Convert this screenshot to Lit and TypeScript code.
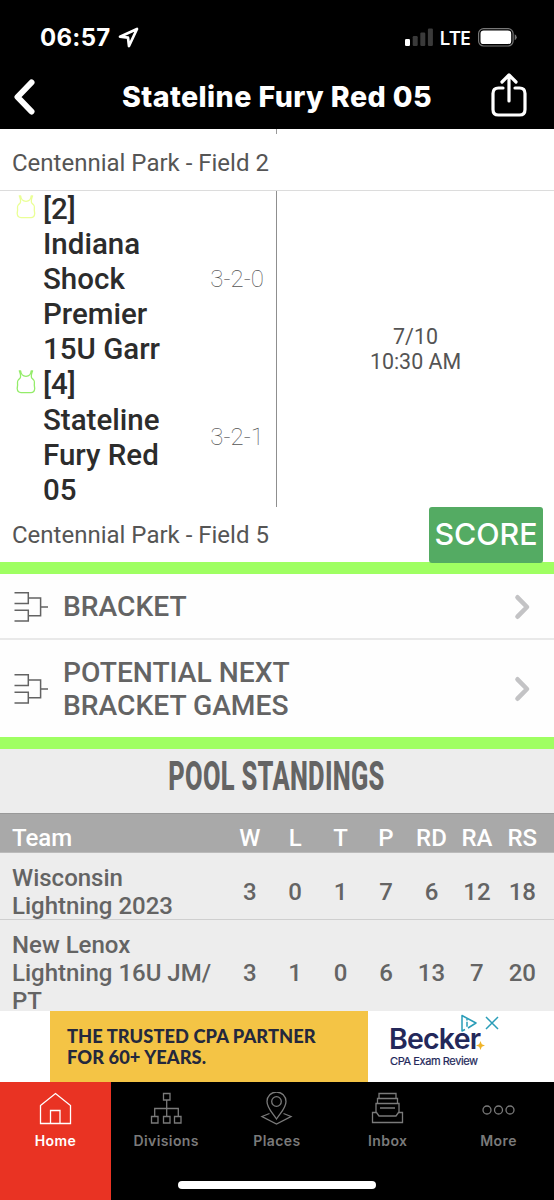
import { LitElement, html, css, svg } from "lit";
import { customElement, property } from "lit/decorators.js";
import { classMap } from "lit/directives/class-map.js";

@customElement("status-bar")
class StatusBar extends LitElement {
  static styles = css`
    :host { display: flex; height: 62px; box-sizing: border-box; padding: 24px 38px 0 40px; justify-content: space-between; align-items: flex-start; color: #fff; font-family: Inter, sans-serif; }
    .side { display: flex; align-items: center; height: 26px; }
    .time { font-size: 24px; font-weight: 700; letter-spacing: 0.300px; margin-right: 7px; }
    .net { font-family: "Open Sans", sans-serif; font-size: 20px; font-weight: 600; letter-spacing: -0.900px; margin: 0 8px 0 6px; }
    .battery { margin-right: -1px; }
    svg { display: block; }
  `;
  render() {
    return html`
      <div class="side">
        <span class="time">06:57</span>
        <svg width="21" height="21" viewBox="0 0 21 21"><path d="M2 9.700 19 2 11 19 10 10.700Z" fill="none" stroke="#fff" stroke-width="2.700" stroke-linejoin="round"/></svg>
      </div>
      <div class="side">
        <svg width="28" height="18" viewBox="0 0 28 18">
          <rect x="0" y="11" width="5" height="7" rx="1.2" fill="#fff"/>
          <g fill="#3a3a3a"><rect x="7.700" y="8" width="5" height="10" rx="1.2"/><rect x="15.300" y="4.500" width="5" height="13.500" rx="1.2"/><rect x="22.900" y="0.500" width="5" height="17.500" rx="1.2"/></g>
        </svg>
        <span class="net">LTE</span>
        <svg class="battery" width="39" height="19" viewBox="0 0 39 19">
          <rect x="0.600" y="0.600" width="34.500" height="17.400" rx="5" fill="none" stroke="#777" stroke-width="1.200"/>
          <rect x="2.500" y="2.500" width="30.700" height="13.600" rx="3.200" fill="#fff"/>
          <path d="M36.700 6.300q2 .8 2 3t-2 3z" fill="#777"/>
        </svg>
      </div>`;
  }
}

@customElement("nav-header")
class NavHeader extends LitElement {
  static styles = css`
    :host { display: grid; grid-template-columns: 50px 1fr 50px; height: 67px; align-items: center; box-sizing: border-box; padding: 2px 13px 0; color: #fff; }
    .title { font: 800 28.600px Inter, sans-serif; letter-spacing: 0.420px; white-space: nowrap; justify-self: center; }
    svg { display: block; }
    .share { margin: 0 0 4px; }
  `;
  render() {
    return html`
      <svg class="back" width="22" height="36" viewBox="0 0 22 36"><path d="M18.500 3.500 4.500 18 18.500 32.500" fill="none" stroke="#fff" stroke-width="6" stroke-linecap="round" stroke-linejoin="round"/></svg>
      <span class="title">Stateline Fury Red 05</span>
      <svg class="share" width="36" height="46" viewBox="0 0 36 46"><path d="M12 16H7.500Q2 16 2 21.500V37.500Q2 43 7.500 43H28.500Q34 43 34 37.500V21.500Q34 16 28.500 16H24M18 29V3M11 10 18 3 25 10" fill="none" stroke="#fff" stroke-width="3.200" stroke-linecap="round" stroke-linejoin="round"/></svg>`;
  }
}

interface Side { lines: string[]; record: string; tone: string; }

@customElement("game-card")
class GameCard extends LitElement {
  static styles = css`
    :host { display: flex; height: 315.500px; border-top: 1px solid #dcdcdc; }
    .teams { width: 276px; border-right: 1px solid #8f8f8f; }
    .team { display: grid; grid-template-columns: 43px 1fr auto; align-items: start; }
    .name { font: 500 29.500px/35.100px Roboto, sans-serif; color: #2c2c2c; padding-top: 1px; margin-bottom: -1px; }
    .line { display: block; white-space: nowrap; }
    .record { align-self: center; font: 100 24px Roboto, sans-serif; color: #555; margin-right: 12px; }
    .jersey { display: block; margin: 4px 0 0 16px; }
    .when { flex: 1; display: flex; align-items: center; justify-content: center; text-align: center; font: 400 21.400px/24.600px Roboto, sans-serif; color: #545454; padding-top: 2px; box-sizing: border-box; height: 315px; }
  `;
  @property({ attribute: false }) sides: Side[] = [];
  render() {
    return html`
      <div class="teams">${this.sides.map(s => html`
        <div class="team">
          <svg class="jersey" width="20" height="25" viewBox="0 0 20 25"><path d="M3.300 .8 4.600 .8Q5.200 6.300 10 6.300T15.200 .8L16.600 .8Q14.600 6 15.700 8Q18.600 10 18.400 13Q18 15 18.700 18.500Q18.500 22.500 15 22.600H5Q1.500 22.500 1.200 18.500Q1.900 15 1.500 13Q1.400 10 4.200 8Q5.300 6 3.300 .8Z" fill="none" stroke=${s.tone} stroke-width="1.300" stroke-linejoin="round"/></svg>
          <div class="name">${s.lines.map(l => html`<span class="line">${l}</span>`)}</div>
          <div class="record">${s.record}</div>
        </div>`)}
      </div>
      <div class="when"><div>7/10<br>10:30 AM</div></div>`;
  }
}

@customElement("link-row")
class LinkRow extends LitElement {
  static styles = css`
    :host { display: flex; align-items: center; box-sizing: border-box; padding: 1px 23px 0 14px; background: #fefefe; }
    .label { flex: 1; margin-left: 14px; font: 500 28.200px/33px Roboto, sans-serif; color: #646464; }
    .line { display: block; white-space: nowrap; }
    svg { display: block; }
  `;
  @property({ attribute: false }) lines: string[] = [];
  render() {
    return html`
      <svg width="35" height="32" viewBox="0 0 35 32"><path d="M.5 1.700H14.300V12.500H.5M.5 19.200H14.300V30H.5M14.300 7H26.600V24.700H14.300M26.600 16H34" fill="none" stroke="#636363" stroke-width="1.500"/></svg>
      <div class="label">${this.lines.map(l => html`<span class="line">${l}</span>`)}</div>
      <svg width="17" height="26" viewBox="0 0 17 26"><path d="M3.500 3.300 13 13 3.500 22.700" fill="none" stroke="#c3c3c5" stroke-width="4.600" stroke-linecap="round" stroke-linejoin="round"/></svg>`;
  }
}

interface Standing { team: string[]; stats: number[]; }

@customElement("pool-standings")
class PoolStandings extends LitElement {
  static styles = css`
    :host { display: flex; flex-direction: column; height: 262px; overflow: hidden; background: #ededed; font-family: Roboto, sans-serif; color: #646464; }
    .title { height: 64px; flex: none; display: flex; justify-content: center; align-items: flex-start; font: 800 41px/54px Roboto, sans-serif; white-space: nowrap; }
    .condensed { transform: scaleX(0.620); letter-spacing: 0.500px; }
    .row { display: grid; grid-template-columns: 215px repeat(7, 45.450px); align-content: start; align-items: center; padding: 11px 0 0 12px; flex: none; box-sizing: border-box; font-size: 24px; font-weight: 500; line-height: 28px; border-bottom: 1px solid #cfcfcf; height: 67px; }
    .row.head { height: 40px; padding-top: 10px; background: #a9a9a9; color: #fff; border-top: 1px solid #999; border-bottom: 1px solid #bbb; }
    .row.tall { height: 106px; }
    .stat { text-align: center; }
    .line { display: block; white-space: nowrap; }
  `;
  private columns = ["W", "L", "T", "P", "RD", "RA", "RS"];
  private rows: Standing[] = [
    { team: ["Wisconsin", "Lightning 2023"], stats: [3, 0, 1, 7, 6, 12, 18] },
    { team: ["New Lenox", "Lightning 16U JM/", "PT"], stats: [3, 1, 0, 6, 13, 7, 20] },
  ];
  render() {
    return html`
      <div class="title"><span class="condensed">POOL STANDINGS</span></div>
      <div class="row head"><span>Team</span>${this.columns.map(c => html`<span class="stat">${c}</span>`)}</div>
      ${this.rows.map(r => html`
        <div class=${classMap({ row: true, tall: r.team.length > 2 })}>
          <div class="team">${r.team.map(l => html`<span class="line">${l}</span>`)}</div>
          ${r.stats.map(n => html`<span class="stat">${n}</span>`)}
        </div>`)}`;
  }
}

@customElement("ad-banner")
class AdBanner extends LitElement {
  static styles = css`
    :host { display: flex; height: 71px; background: #fff; padding-left: 50px; box-sizing: border-box; }
    .pitch { width: 318px; box-sizing: border-box; background: #f4c445; padding: 15px 0 0 17px; font: 900 18.300px/21.200px Lato, sans-serif; color: #24283d; letter-spacing: 0.060px; white-space: nowrap; }
    .brand { position: relative; padding: 11px 0 0 21px; color: #23285a; }
    .name { font: 600 28.500px/34px Inter, sans-serif; letter-spacing: -0.800px; }
    .sub { font: 400 11px/10px Inter, sans-serif; white-space: nowrap; letter-spacing: -0.400px; -webkit-text-stroke: 0.200px currentColor; padding-left: 1px; }
    .spark { position: absolute; left: 108px; top: 29.500px; }
    .choices { position: absolute; left: 92px; top: 3px; }
  `;
  render() {
    return html`
      <div class="pitch">THE TRUSTED CPA PARTNER<br>FOR 60+ YEARS.</div>
      <div class="brand">
        <div class="name">Becker</div>
        <div class="sub">CPA Exam Review</div>
        <svg class="spark" width="9" height="9" viewBox="0 0 9 9"><path d="M4.500 0 5.800 3.200 9 4.500 5.800 5.800 4.500 9 3.200 5.800 0 4.500 3.200 3.200Z" fill="#f0b429"/></svg>
        <svg class="choices" width="40" height="18" viewBox="0 0 40 18">
          <path d="M5 15.500 2 17V1.500L16 9 8 14" fill="none" stroke="#2a9db8" stroke-width="1.500" stroke-linejoin="round"/>
          <path d="M7 4.700v1.700M7 7.700v5M26 3 38 15M38 3 26 15" stroke="#2a9db8" stroke-width="1.500" fill="none"/>
        </svg>
      </div>`;
  }
}

const tabIcons = {
  Home: svg`<path d="M2.500 13.500 17.500 1.500 32.500 13.500V31.500H2.500ZM12.500 31.500V18.500H22V31.500"/>`,
  Divisions: svg`<path d="M14.500 1.500h6.500v6.500h-6.500ZM2.500 24.500h6.500v6.500h-6.500ZM14.500 24.500h6.500v6.500h-6.500ZM25.500 24.500h6.500v6.500h-6.500ZM17.700 8v16.500M5.700 24.500V16.500H29.300V24.500"/>`,
  Places: svg`<path d="M17.500 27C12 19 8 15.500 8 9.500A9.500 9.500 0 0 1 27 9.500C27 15.500 23 19 17.500 27ZM10.500 21.500 3 24.500 17.500 32 32 24.500 24.500 21.500"/><circle cx="17.500" cy="9.500" r="4.800"/>`,
  Inbox: svg`<path d="M2.500 20.500H6.500L9 24H26L28.500 20.500H32.500V30.500H2.500ZM6 20.500V11.500H29V20.500M7.500 11.500V6.500H27.500V11.500M9 6.500V1.500H26V6.500M10 16H25"/>`,
  More: svg`<circle cx="6" cy="18" r="4"/><circle cx="17.500" cy="18" r="4"/><circle cx="29" cy="18" r="4"/>`,
};

@customElement("tab-bar")
class TabBar extends LitElement {
  static styles = css`
    :host { display: grid; grid-template-columns: repeat(5, 1fr); height: 118px; background: #000; position: relative; }
    .tab { display: flex; flex-direction: column; align-items: center; padding-top: 10px; color: #7a7a7a; font: 600 14px/18px Inter, sans-serif; letter-spacing: 0.400px; }
    .tab.active { background: #e93323; color: #fff; }
    svg { display: block; fill: none; stroke: currentColor; stroke-width: 1.300; margin-bottom: 7px; }
    .indicator { position: absolute; left: 178px; top: 99px; width: 198px; height: 8px; border-radius: 4px; background: #fff; }
  `;
  render() {
    return html`${Object.entries(tabIcons).map(([label, icon]) => html`
      <div class=${classMap({ tab: true, active: label === "Home" })}>
        <svg width="35" height="33" viewBox="0 0 35 33">${icon}</svg>${label}
      </div>`)}<div class="indicator"></div>`;
  }
}

@customElement("app-root")
class AppRoot extends LitElement {
  static styles = css`
    :host { display: flex; flex-direction: column; width: 554px; height: 1200px; overflow: hidden; background: #fff; font-family: Roboto, sans-serif; }
    .top { background: #000; height: 129px; flex: none; }
    .previous { height: 61px; display: grid; grid-template-columns: 276px 1fr; flex: none; }
    .stub { height: 5px; width: 1px; background: #999; }
    .place { font-size: 24px; color: #555; padding-left: 12px; display: flex; align-items: center; white-space: nowrap; }
    .previous .place { padding-top: 7px; }
    .venue { height: 55.500px; display: flex; justify-content: space-between; padding-right: 11px; flex: none; }
    .venue .place { padding-top: 1px; }
    .score { width: 114px; height: 56px; padding-bottom: 1px; box-sizing: border-box; background: #54ab63; color: #fff; border-radius: 3px; display: flex; align-items: center; justify-content: center; font: 500 30.400px Inter, sans-serif; position: relative; }
    .band { height: 12px; background: #9fff62; flex: none; }
    .single { height: 66px; border-bottom: 2px solid #e9e9e9; }
    .double { height: 97px; }
  `;
  private sides: Side[] = [
    { lines: ["[2]", "Indiana", "Shock", "Premier", "15U Garr"], record: "3-2-0", tone: "#eaff96" },
    { lines: ["[4]", "Stateline", "Fury Red", "05"], record: "3-2-1", tone: "#94ec6a" },
  ];
  render() {
    return html`
      <div class="top"><status-bar></status-bar><nav-header></nav-header></div>
      <div class="previous"><span class="place">Centennial Park - Field 2</span><span class="stub"></span></div>
      <game-card .sides=${this.sides}></game-card>
      <div class="venue"><span class="place">Centennial Park - Field 5</span><span class="score">SCORE</span></div>
      <div class="band"></div>
      <link-row class="single" .lines=${["BRACKET"]}></link-row>
      <link-row class="double" .lines=${["POTENTIAL NEXT", "BRACKET GAMES"]}></link-row>
      <div class="band"></div>
      <pool-standings></pool-standings>
      <ad-banner></ad-banner>
      <tab-bar></tab-bar>`;
  }
}
